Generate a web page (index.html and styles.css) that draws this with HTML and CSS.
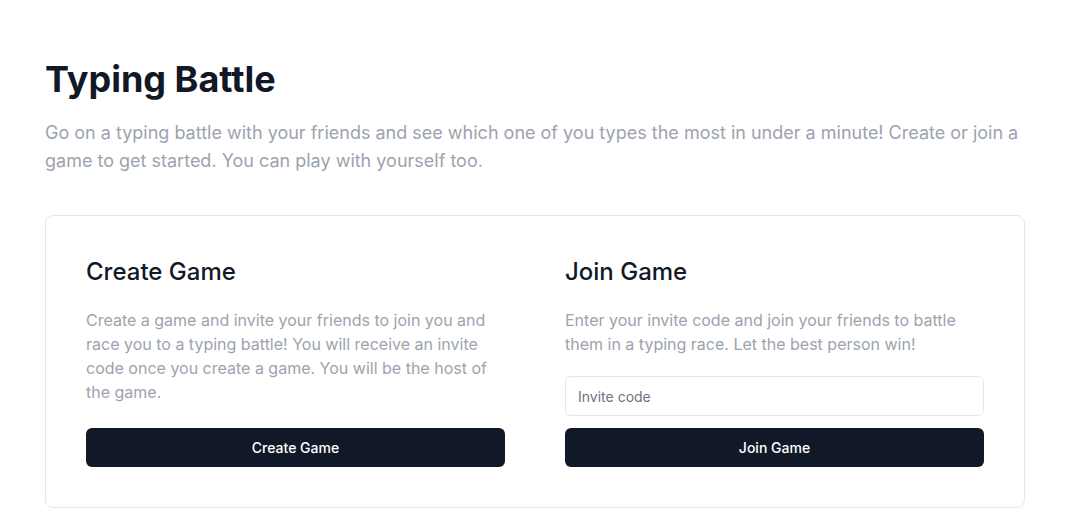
FILE: index.html
```html
<!DOCTYPE html>
<html>
<head>
<meta charset="utf-8">
<link rel="stylesheet" href="styles.css">
</head>
<body>
<main class="page">
  <h1 class="title">Typing Battle</h1>
  <p class="lead">Go on a typing battle with your friends and see which one of you types the most in under a minute! Create or join a game to get started. You can play with yourself too.</p>
  <section class="card">
    <div class="col">
      <h2 class="heading">Create Game</h2>
      <p class="desc">Create a game and invite your friends to join you and race you to a typing battle! You will receive an invite code once you create a game. You will be the host of the game.</p>
      <button class="btn btn-create">Create Game</button>
    </div>
    <div class="col">
      <h2 class="heading">Join Game</h2>
      <p class="desc">Enter your invite code and join your friends to battle them in a typing race. Let the best person win!</p>
      <input class="input" type="text" placeholder="Invite code">
      <button class="btn btn-join">Join Game</button>
    </div>
  </section>
</main>
</body>
</html>
```
FILE: styles.css
```css
* { box-sizing: border-box; }
html, body { margin: 0; padding: 0; background: #ffffff; }
body { font-family: Inter, "Noto Sans", sans-serif; color: #111827; }
.page { width: 980px; margin-left: 45px; padding-top: 59px; }
.title { margin: 0; font-size: 36px; line-height: 40px; font-weight: 700; color: #111827; }
.lead { margin: 20px 0 0; font-size: 18px; line-height: 28px; color: #9ca3af; }
.card { margin-top: 40px; border: 1px solid #e5e7eb; border-radius: 8px; padding: 40px; display: grid; grid-template-columns: 1fr 1fr; column-gap: 60px; }
.col { display: flex; flex-direction: column; }
.heading { margin: 0; font-size: 24px; line-height: 32px; font-weight: 500; color: #111827; }
.desc { margin: 20px 0 0; font-size: 16px; line-height: 24px; color: #9ca3af; }
.btn { height: 39px; border: none; border-radius: 6px; background: #111827; color: #ffffff; font-family: Inter, "Noto Sans", sans-serif; font-size: 14px; font-weight: 500; cursor: pointer; }
.btn-create { margin-top: 24px; }
.input { margin-top: 20px; height: 40px; border: 1px solid #e5e7eb; border-radius: 6px; padding: 0 12px; font-family: Inter, "Noto Sans", sans-serif; font-size: 14px; color: #111827; outline: none; }
.input::placeholder { color: #6b7280; }
.btn-join { margin-top: 12px; }
```
